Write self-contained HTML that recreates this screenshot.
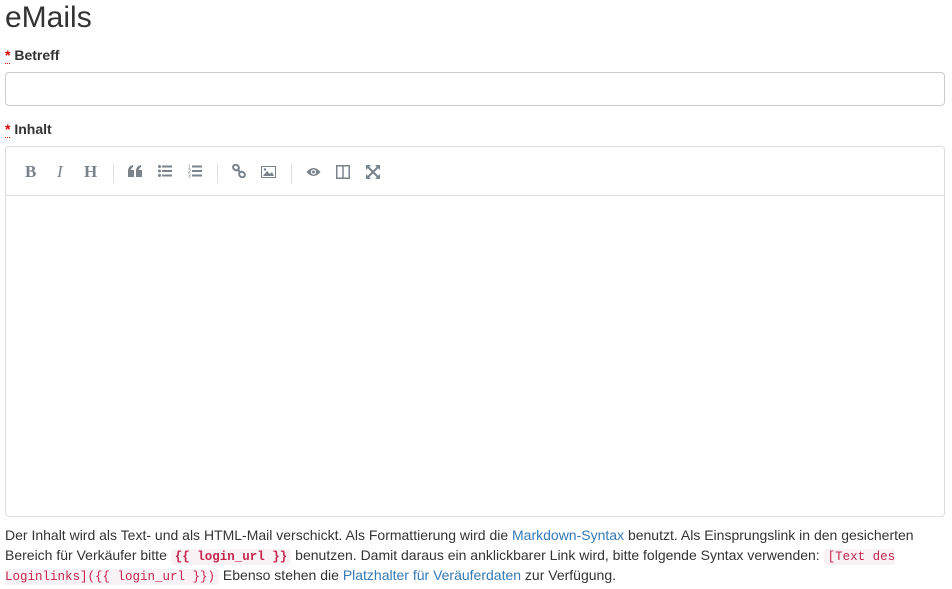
<!DOCTYPE html>
<html><head><meta charset="utf-8"><style>
body{margin:0;background:#fff;font-family:"Liberation Sans",sans-serif;color:#333;font-size:14px;}
h1{position:absolute;left:5px;top:1px;margin:0;font-weight:400;font-size:30px;line-height:34px;}
.lbl{position:absolute;left:5px;font-weight:bold;font-size:14px;}
.lbl b{color:#d00;border-bottom:1px dotted #d00;font-weight:bold;}
.inp{position:absolute;left:5px;width:938px;top:72px;height:32px;border:1px solid #ccc;border-radius:4px;}
.ed{position:absolute;left:5px;top:146px;width:938px;height:369px;border:1px solid #ddd;border-radius:4px;}
.tb{height:48px;border-bottom:1px solid #ddd;position:relative;}
.tb span{position:absolute;top:15px;font-size:17px;color:#7a838c;font-family:"Liberation Serif",serif;}
.tb svg{position:absolute;top:18px}
.sep{position:absolute;top:17px;width:1px;height:19px;background:#ddd;}
.help{position:absolute;left:5px;top:525px;width:940px;line-height:20px;font-size:14px;}
a{color:#337ab7;text-decoration:none}
code{font-family:"Liberation Mono",monospace;font-size:12.5px;line-height:14px;color:#c7254e;background:#f9f2f4;padding:1px 4px;border-radius:3px}
</style></head><body>
<h1>eMails</h1>
<div class="lbl" style="top:47px"><b>*</b> Betreff</div>
<div class="inp"></div>
<div class="lbl" style="top:121px"><b>*</b> Inhalt</div>
<div class="ed"><div class="tb">
<span style="left:19px;font-weight:bold">B</span>
<span style="left:51px;font-style:italic">I</span>
<span style="left:78px;font-weight:bold">H</span>
<div class="sep" style="left:107px"></div>
<svg style="left:122px" width="14" height="12" fill="#7a838c"><path d="M0 6Q0 1 5 0V2Q3 3 3 5H6V12H0Z"/><path d="M8 6Q8 1 13 0V2Q11 3 11 5H14V12H8Z"/></svg>
<svg style="left:152px" width="14" height="12" fill="#7a838c"><circle cx="1.5" cy="1.5" r="1.5"/><circle cx="1.5" cy="6" r="1.5"/><circle cx="1.5" cy="10.5" r="1.5"/><rect x="4" y="0.5" width="10" height="2"/><rect x="4" y="5" width="10" height="2"/><rect x="4" y="9.5" width="10" height="2"/></svg>
<svg style="left:182px;top:17px" width="14" height="14" fill="#7a838c"><text x="0" y="4.5" font-size="5" font-family="Liberation Sans">1</text><text x="0" y="9" font-size="5" font-family="Liberation Sans">2</text><text x="0" y="13.5" font-size="5" font-family="Liberation Sans">3</text><rect x="4" y="1.5" width="10" height="2"/><rect x="4" y="6" width="10" height="2"/><rect x="4" y="10.5" width="10" height="2"/></svg>
<div class="sep" style="left:211px"></div>
<svg style="left:226px;top:17px" width="14" height="14" fill="none" stroke="#7a838c" stroke-width="2"><rect x="1" y="1" width="6" height="5" rx="2.5" transform="rotate(40 4 3.5)"/><rect x="7" y="8" width="6" height="5" rx="2.5" transform="rotate(40 10 10.5)"/><line x1="5" y1="5" x2="9" y2="9"/></svg>
<svg style="left:255px;top:19px" width="15" height="12"><rect x=".5" y=".5" width="14" height="11" fill="none" stroke="#7a838c"/><path d="M2 10 L6 5 L9 8 L11 6 L13 10Z" fill="#7a838c"/><circle cx="4" cy="3.5" r="1.2" fill="#7a838c"/></svg>
<div class="sep" style="left:285px"></div>
<svg style="left:300px;top:20px" width="15" height="10"><path d="M0.5 5Q7.5 -3 14.5 5Q7.5 13 0.5 5Z" fill="#7a838c"/><circle cx="7.5" cy="5" r="2.6" fill="#fff"/><circle cx="7.5" cy="5" r="1.5" fill="#7a838c"/></svg>
<svg style="left:330px" width="14" height="14"><rect x=".75" y=".75" width="12.5" height="12.5" fill="none" stroke="#7a838c" stroke-width="1.5"/><line x1="7" y1="0" x2="7" y2="14" stroke="#7a838c" stroke-width="1.5"/></svg>
<svg style="left:360px" width="14" height="14"><path d="M2 2L12 12M12 2L2 12" stroke="#7a838c" stroke-width="2"/><path d="M0 0h5L0 5ZM14 0v5L9 0ZM0 14v-5L5 14ZM14 14h-5L14 9Z" fill="#7a838c"/></svg>
</div></div>
<div class="help">Der Inhalt wird als Text- und als HTML-Mail verschickt. Als Formattierung wird die <a>Markdown-Syntax</a> benutzt. Als Einsprungslink in den gesicherten Bereich für Verkäufer bitte <code><b>{{ login_url }}</b></code> benutzen. Damit daraus ein anklickbarer Link wird, bitte folgende Syntax verwenden: <code>[Text des Loginlinks]({{ login_url }})</code> Ebenso stehen die <a>Platzhalter für Veräuferdaten</a> zur Verfügung.</div>
</body></html>
